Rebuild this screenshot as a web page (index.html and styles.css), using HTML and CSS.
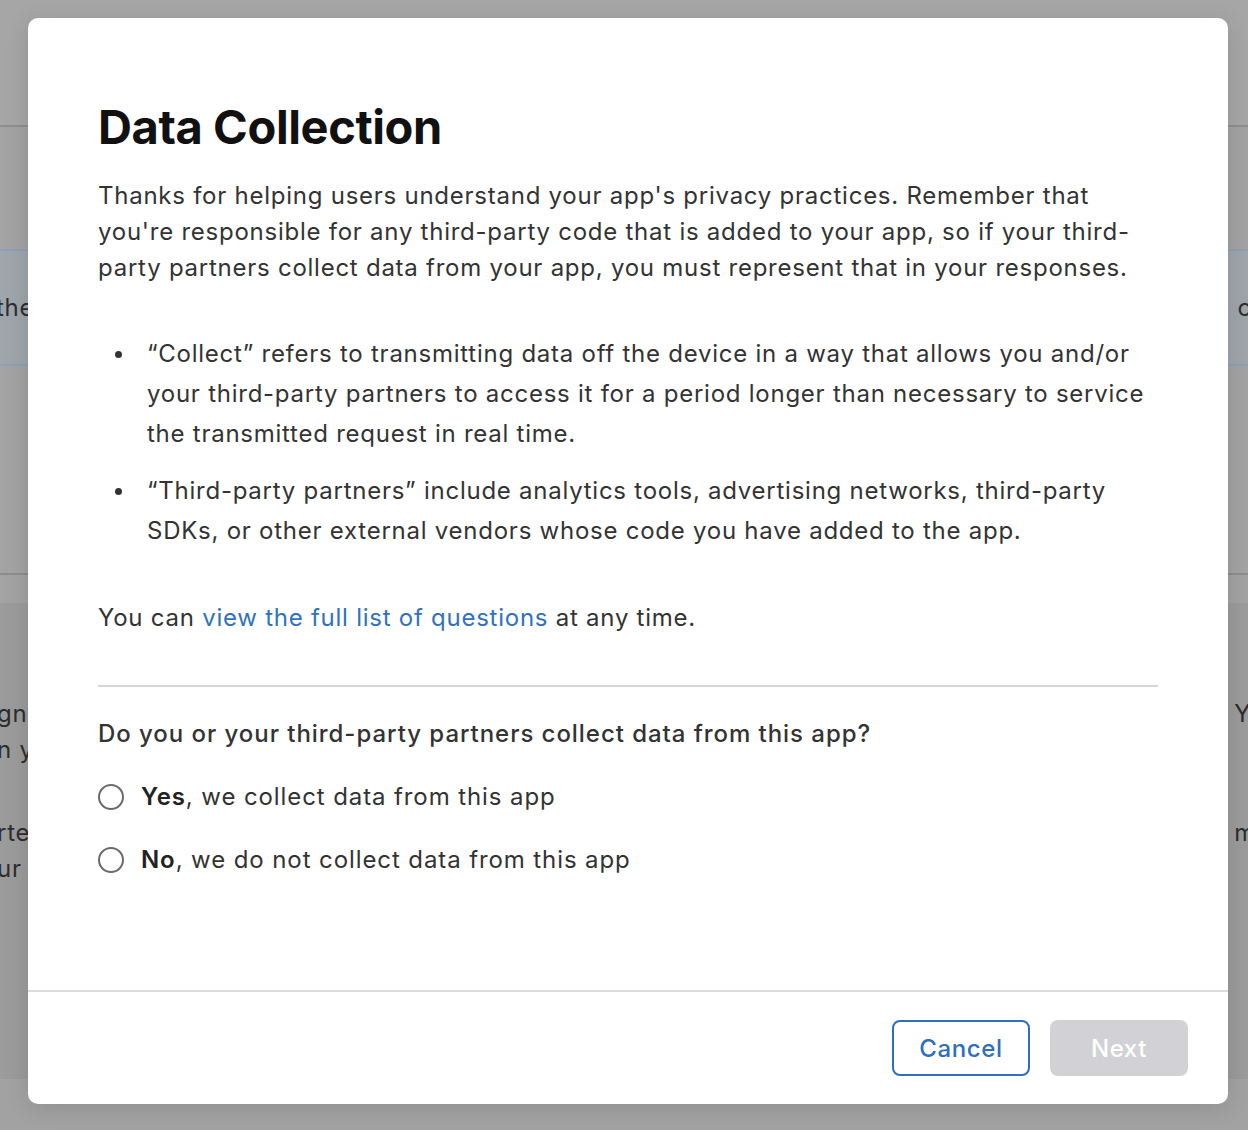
FILE: index.html
```html
<!DOCTYPE html>
<html lang="en">
<head>
<meta charset="utf-8">
<title>Data Collection</title>
<link rel="stylesheet" href="styles.css">
</head>
<body>
<div class="backdrop">
  <div class="bd-header"></div>
  <div class="bd-gap"></div>
  <div class="bd-band">
    <span class="bd-left">the</span>
    <span class="bd-right">c</span>
  </div>
  <div class="bd-mid">
    <span class="bd-right bd-paren">(</span>
  </div>
  <div class="bd-gap2"></div>
  <div class="bd-dark">
    <div class="bd-rows">
      <div class="bd-col-left">
        <p class="bd-line">gn</p>
        <p class="bd-line">n y</p>
        <p class="bd-line bd-spaced">rte</p>
        <p class="bd-line">ur a</p>
      </div>
      <div class="bd-col-right">
        <p class="bd-line">Y</p>
        <p class="bd-line">&nbsp;</p>
        <p class="bd-line bd-spaced">m</p>
      </div>
    </div>
  </div>
  <div class="bd-bottom"></div>
</div>

<div class="modal" role="dialog" aria-labelledby="modal-title">
  <div class="modal-body">
    <h1 id="modal-title" class="title">Data Collection</h1>
    <p class="intro">Thanks for helping users understand your app's privacy practices. Remember that you're responsible for any third-party code that is added to your app, so if your third-party partners collect data from your app, you must represent that in your responses.</p>
    <ul class="points">
      <li>“Collect” refers to transmitting data off the device in a way that allows you and/or your third-party partners to access it for a period longer than necessary to service the transmitted request in real time.</li>
      <li>“Third-party partners” include analytics tools, advertising networks, third-party SDKs, or other external vendors whose code you have added to the app.</li>
    </ul>
    <p class="note">You can <a class="link" href="#">view the full list of questions</a> at any time.</p>
    <hr class="divider">
    <p class="question">Do you or your third-party partners collect data from this app?</p>
    <label class="option"><span class="radio"></span><span class="option-text"><b>Yes</b>, we collect data from this app</span></label>
    <label class="option"><span class="radio"></span><span class="option-text"><b>No</b>, we do not collect data from this app</span></label>
  </div>
  <div class="modal-footer">
    <button class="btn btn-cancel" type="button">Cancel</button>
    <button class="btn btn-next" type="button" disabled>Next</button>
  </div>
</div>
</body>
</html>
```

FILE: styles.css
```css
* { box-sizing: border-box; }

html, body {
  margin: 0;
  padding: 0;
  height: 100%;
}

body {
  font-family: Inter, "Noto Sans", "Liberation Sans", sans-serif;
  background: #a2a2a2;
  overflow: hidden;
  position: relative;
}

/* ---------- backdrop (dimmed page behind the dialog) ---------- */
.backdrop {
  display: flex;
  flex-direction: column;
  height: 1130px;
  color: #2d2d2d;
  font-size: 24px;
  letter-spacing: 0.75px;
}

.bd-header {
  height: 127px;
  background: #a6a6a6;
  border-bottom: 2px solid #8f8f8f;
}

.bd-gap {
  height: 122px;
  background: #a3a3a3;
}

.bd-band {
  height: 117px;
  background: #9ea5ab;
  border-top: 2px solid #8ea0b4;
  border-bottom: 2px solid #8ea0b4;
  display: flex;
  justify-content: space-between;
  align-items: center;
}

.bd-left {
  margin-left: -4px;
  white-space: nowrap;
}

.bd-right {
  margin-right: -4px;
  white-space: nowrap;
}

.bd-mid {
  height: 209px;
  background: #a3a3a3;
  border-bottom: 2px solid #8d8d8d;
  display: flex;
  justify-content: flex-end;
  padding-top: 40px;
}

.bd-paren {
  margin-right: -8px;
  color: #3a3a3a;
}

.bd-gap2 {
  height: 28px;
  background: #a3a3a3;
}

.bd-dark {
  height: 476px;
  background: #9b9b9b;
  padding-top: 93px;
}

.bd-rows {
  display: flex;
  justify-content: space-between;
}

.bd-col-left {
  margin-left: -3px;
}

.bd-col-right {
  margin-right: -8px;
}

.bd-line {
  margin: 0;
  line-height: 36px;
  white-space: nowrap;
}

.bd-spaced {
  margin-top: 47px;
}

.bd-bottom {
  flex: 1;
  background: #a2a2a2;
}

/* ---------- dialog ---------- */
.modal {
  position: absolute;
  top: 18px;
  left: 28px;
  width: 1200px;
  height: 1086px;
  background: #ffffff;
  border-radius: 10px;
  box-shadow: 0 4px 24px rgba(0, 0, 0, 0.12);
  display: flex;
  flex-direction: column;
  color: #333333;
  letter-spacing: 0.75px;
}

.modal-body {
  flex: 1;
  padding: 76px 70px 0 70px;
}

.title {
  margin: 0 0 18px;
  font-size: 47px;
  line-height: 66px;
  font-weight: 700;
  color: #111111;
  letter-spacing: -0.4px;
}

.intro {
  margin: 0;
  font-size: 24px;
  line-height: 36px;
}

.points {
  margin: 48px 0 0;
  padding: 0;
  list-style: none;
  font-size: 24px;
  line-height: 40px;
}

.points li {
  display: flex;
  align-items: flex-start;
}

.points li::before {
  content: "";
  flex: none;
  width: 7px;
  height: 7px;
  border-radius: 50%;
  background: #333333;
  margin: 17px 25px 0 17px;
}

.points li + li {
  margin-top: 17px;
}

.note {
  margin: 47px 0 0;
  font-size: 24px;
  line-height: 40px;
}

.link {
  color: #2f72c0;
  text-decoration: none;
}

.divider {
  margin: 47px 0 0;
  border: 0;
  height: 2px;
  background: #d6d6d6;
}

.question {
  margin: 27px 0 0;
  font-size: 24px;
  line-height: 40px;
  font-weight: 500;
  letter-spacing: 0.95px;
}

.option {
  display: flex;
  align-items: center;
  gap: 17px;
  font-size: 24px;
  line-height: 40px;
  margin-top: 23px;
  letter-spacing: 0.9px;
}

.option + .option {
  margin-top: 23px;
}

.option b {
  font-weight: 600;
  color: #222222;
}

.radio {
  width: 26px;
  height: 26px;
  border: 2px solid #6b6b6b;
  border-radius: 50%;
  flex: none;
}

.modal-footer {
  border-top: 2px solid #dcdcdc;
  padding: 28px 40px 28px;
  display: flex;
  justify-content: flex-end;
  gap: 20px;
}

.btn {
  width: 138px;
  height: 56px;
  border-radius: 8px;
  font-family: inherit;
  font-size: 24px;
  font-weight: 500;
  letter-spacing: 0.6px;
  display: flex;
  align-items: center;
  justify-content: center;
  padding: 0;
}

.btn-cancel {
  background: #ffffff;
  border: 2px solid #2f6fbf;
  color: #2f6fbf;
}

.btn-next {
  background: #d1d1d6;
  border: 0;
  color: #ffffff;
}
```
